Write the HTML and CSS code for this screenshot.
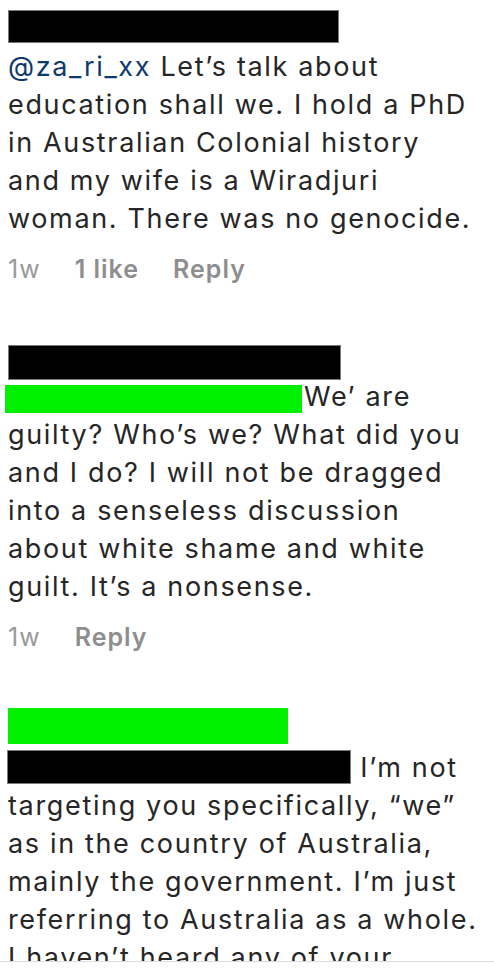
FILE: index.html
```html
<!DOCTYPE html>
<html lang="en">
<head>
<meta charset="utf-8">
<title>Comments</title>
<link rel="stylesheet" href="styles.css">
</head>
<body>
<main class="thread">
  <article class="comment comment-first">
    <div class="redact redact-black name-bar bar-1"></div>
    <p class="text"><span class="mention">@za_ri_xx</span> Let’s talk about<br>education shall we. I hold a PhD<br>in Australian Colonial history<br>and my wife is a Wiradjuri<br>woman. There was no genocide.</p>
    <div class="meta"><span class="time">1w</span><span class="action">1 like</span><span class="action">Reply</span></div>
  </article>

  <article class="comment comment-second">
    <div class="redact redact-black name-bar bar-2"></div>
    <p class="text"><span class="redact redact-green inline-green"></span>We’ are<br>guilty? Who’s we? What did you<br>and I do? I will not be dragged<br>into a senseless discussion<br>about white shame and white<br>guilt. It’s a nonsense.</p>
    <div class="meta"><span class="time">1w</span><span class="action">Reply</span></div>
  </article>

  <article class="comment comment-third">
    <div class="redact redact-green name-bar bar-3"></div>
    <p class="text"><span class="redact redact-black inline-black"></span> I’m not<br>targeting you specifically, “we”<br>as in the country of Australia,<br>mainly the government. I’m just<br>referring to Australia as a whole.<br>I haven’t heard any of your</p>
  </article>
</main>
</body>
</html>
```

FILE: styles.css
```css
html, body {
  margin: 0;
  padding: 0;
  background: #ffffff;
}

.thread {
  height: 962px;
  overflow: hidden;
  border-bottom: 1px solid #dcdcdc;
  box-sizing: border-box;
  padding: 10px 0 0 8px;
  font-family: Inter, "Noto Sans", sans-serif;
  color: #262626;
}

.comment {
  margin: 0;
}

.text {
  margin: 0;
  font-size: 27px;
  line-height: 38px;
  letter-spacing: 1.65px;
  white-space: nowrap;
}

.mention {
  color: #0d3a6b;
}

.redact {
  box-sizing: border-box;
}

.redact-black {
  background: #000000;
  border: 1px solid #7a7a7a;
}

.redact-green {
  background: #00f000;
}

.name-bar {
  display: block;
}

.bar-1 {
  width: 331px;
  height: 33px;
  margin-bottom: 5px;
}

.bar-2 {
  width: 333px;
  height: 35px;
  margin-top: 57px;
  margin-bottom: -2px;
}

.bar-3 {
  width: 280px;
  height: 36px;
  margin-top: 52px;
  margin-bottom: 5px;
}

.inline-green {
  display: inline-block;
  width: 297px;
  height: 28px;
  margin-left: -3px;
  margin-right: 2px;
  vertical-align: -7px;
}

.inline-black {
  display: inline-block;
  width: 344px;
  height: 34px;
  margin-left: -1px;
  vertical-align: -7px;
}

.meta {
  display: flex;
  gap: 34px;
  margin-top: 12px;
  font-size: 25px;
  line-height: 38px;
  letter-spacing: 1px;
  color: #8e8e8e;
}

.time {
  font-weight: 400;
  color: #9a9a9a;
}

.action {
  font-weight: 600;
}
```
